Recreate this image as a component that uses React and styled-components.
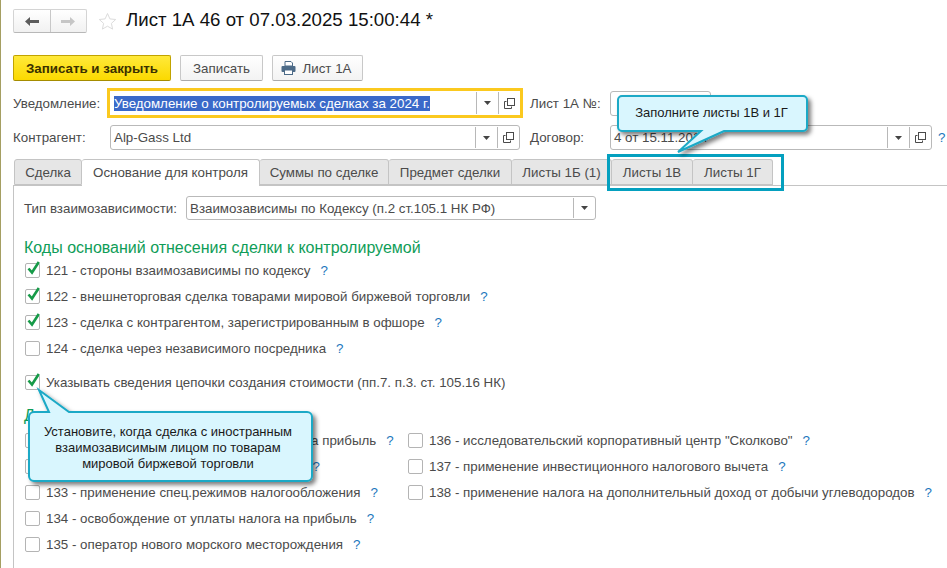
import React from "react";
import styled, { createGlobalStyle } from "styled-components";

const Global = createGlobalStyle`
  html, body { margin: 0; padding: 0; background: #fff; }
  body { font-family: "Liberation Sans", Arial, sans-serif; font-size: 13.33px; color: #4b4b4b; }
`;

const Page = styled.div`
  position: relative; width: 947px; height: 568px; overflow: hidden; box-sizing: border-box;
  border-left: 1px solid #a59f62; padding: 0 0 0 12px; background: #fff;
`;
const TitleBar = styled.div`display: flex; align-items: center; height: 24px; margin-top: 9px;`;
const NavGroup = styled.div`
  display: flex; width: 74px; height: 24px; box-sizing: border-box; border: 1px solid #d4d4d4;
  border-bottom-color: #b8b8b8; border-radius: 2px; background: linear-gradient(#fff, #f1f1f1);
`;
const NavBtn = styled.div`
  flex: 1; display: flex; align-items: center; justify-content: center;
  & + & { border-left: 1px solid #c8c8c8; }
`;
const Star = styled.svg`margin-left: 11px; width: 19px; height: 19px; flex: none;`;
const Title = styled.div`margin-left: 9px; font-size: 18.67px; color: #111; white-space: nowrap; position: relative; top: -1px;`;
const Toolbar = styled.div`display: flex; gap: 9px; margin-top: 22px; height: 26px;`;
const Button = styled.div`
  display: flex; align-items: center; justify-content: center; gap: 7px; box-sizing: border-box;
  width: ${p => p.$w}px; height: 26px; border-radius: 2px; white-space: nowrap; padding-right: ${p => p.$pr || 0}px;
  border: 1px solid ${p => (p.$primary ? "#c1a300" : "#c8c8c8")};
  border-bottom-color: ${p => (p.$primary ? "#a58c00" : "#aaa")};
  background: ${p => (p.$primary ? "linear-gradient(#ffe93a, #fbd900)" : "linear-gradient(#fff, #f3f3f3)")};
  color: ${p => (p.$primary ? "#3a3000" : "#4b4b4b")};
  font-weight: ${p => (p.$primary ? 700 : 400)};
`;
const FormRow = styled.div`display: flex; align-items: center; height: ${p => p.$h || 25}px; margin-top: ${p => p.$mt || 0}px;`;
const Label = styled.div`width: ${p => p.$w}px; flex: none; white-space: nowrap; margin-left: ${p => p.$ml || 0}px;`;
const Field = styled.div`
  display: flex; align-items: stretch; box-sizing: border-box; width: ${p => p.$w}px; height: ${p => p.$h || 25}px; flex: none;
  border: 1px solid #b9b9b9; border-radius: 3px; background: #fff;
  ${p => p.$focus && "border: 3px solid #fbc91f; border-radius: 0; height: 30px;"}
`;
const FieldText = styled.div`flex: 1; padding-left: ${p => p.$pl || 3}px; display: flex; align-items: center; white-space: nowrap; overflow: hidden; color: #4b4b4b;`;
const Selected = styled.span`background: #3a69c9; color: #fff; line-height: 15px;`;
const FieldBtn = styled.div`
  width: 21px; flex: none; display: flex; align-items: center; justify-content: center;
  margin: 1px 0; border-left: 1px solid #b8b8b8;
`;
const Help = styled.span`color: #1c78bd; font-size: 13.33px; margin-left: ${p => p.$ml || 10}px;`;
const Tabs = styled.div`
  display: flex; height: 27px; margin-top: 9px; padding-left: 1px; box-sizing: border-box;
  border-bottom: 1px solid #c4c4c4;
`;
const Tab = styled.div`
  width: ${p => p.$w}px; box-sizing: border-box; height: ${p => (p.$active ? 27 : 26)}px; flex: none;
  display: flex; align-items: center; justify-content: center; white-space: nowrap;
  padding-bottom: ${p => (p.$active ? 1 : 0)}px;
  border: 1px solid #c4c4c4; border-left-width: ${p => (p.$first ? 1 : 0)}px; border-bottom: ${p => (p.$active ? "0" : "1px solid #c4c4c4")};
  border-radius: 3px 3px 0 0; background: ${p => (p.$active ? "#fff" : "#e6e6e6")}; color: #4b4b4b;
`;
const Panel = styled.div`
  box-sizing: border-box; height: 382px; border-left: 1px solid #c4c4c4; padding: 10px 0 0 10px;
`;
const TypeRow = styled.div`display: flex; align-items: center; height: 24px;`;
const Heading = styled.div`font-size: 16px; color: #0f9d58; margin-top: ${p => p.$mt}px; height: 18px; line-height: 18px; white-space: nowrap;`;
const CheckList = styled.div`display: flex; flex-direction: column;`;
const CheckRow = styled.div`display: flex; align-items: center; height: 26px; white-space: nowrap;`;
const Box = styled.div`
  position: relative; width: 15px; height: 15px; box-sizing: border-box; flex: none; margin: 0 6px 0 1px;
  border: 1px solid #b4b4b4; border-radius: 2px; background: #fff;
`;
const Tick = styled.svg`position: absolute; left: 0; top: -4px; width: 15px; height: 16px;`;
const Columns = styled.div`display: grid; grid-template-columns: 383px 1fr; margin-top: 2px;`;
const Spacer = styled.div`height: 8px;`;
const Outline = styled.div`
  position: absolute; left: 606px; top: 154px; width: 177px; height: 37px; box-sizing: border-box; border: 3px solid #04a0bf;
`;
const CalloutSvg = styled.svg`position: absolute; left: 0; top: 0; overflow: visible;`;
const CalloutText = styled.div`
  position: absolute; left: ${p => p.$x}px; top: ${p => p.$y}px; width: ${p => p.$w}px; height: ${p => p.$h}px;
  display: flex; align-items: center; justify-content: center; text-align: center; color: #1a1a1a;
  font-size: 13px; line-height: 16px; white-space: nowrap;
`;

const Dropdown = () => (
  <svg width="7" height="4" viewBox="0 0 7 4"><path d="M0 0h7L3.500 4z" fill="#444" /></svg>
);
const OpenIcon = () => (
  <svg width="11" height="11" viewBox="0 0 11 11" fill="none" stroke="#4a4a4a">
    <rect x="3.500" y="0.500" width="7" height="7" fill="#fff" />
    <path d="M2.500 3.500H0.500v7h7V8.500" />
  </svg>
);
const Arrow = ({ flip, color }) => (
  <svg width="14" height="9" viewBox="0 0 14 9" style={flip ? { transform: "scaleX(-1)" } : undefined}>
    <path d="M0 4.500L5 0v3h9v3H5v3z" fill={color} />
  </svg>
);
const Printer = () => (
  <svg width="15" height="14" viewBox="0 0 15 14">
    <path d="M4 0.500h6l1.500 1.500V5H4z" fill="#fff" stroke="#4d6b88" />
    <rect x="0.500" y="5" width="14" height="6" rx="1" fill="#4d6b88" />
    <rect x="3.500" y="9" width="8" height="4.500" fill="#fff" stroke="#4d6b88" />
  </svg>
);
const Check = ({ on }) => (
  <Box>
    {on && (
      <Tick viewBox="0 0 15 16">
        <path d="M2.500 8.500l3.500 4L12.800 2" fill="none" stroke="#169a48" strokeWidth="2.600" />
      </Tick>
    )}
  </Box>
);
const Item = ({ on, text }) => (
  <CheckRow>
    <Check on={on} />
    {text}
    <Help>?</Help>
  </CheckRow>
);

export default function App() {
  return (
    <Page>
      <Global />
      <TitleBar>
        <NavGroup>
          <NavBtn><Arrow color="#5c5c5c" /></NavBtn>
          <NavBtn><Arrow flip color="#c6c6c6" /></NavBtn>
        </NavGroup>
        <Star viewBox="0 0 19 19">
          <path d="M9.500 1.500l2.400 5.400 5.800.6-4.300 3.900 1.200 5.700-5.100-2.900-5.100 2.900 1.200-5.700L1.300 7.500l5.800-.6z" fill="#fff" stroke="#dcdcdc" />
        </Star>
        <Title>Лист 1А 46 от 07.03.2025 15:00:44 *</Title>
      </TitleBar>
      <Toolbar>
        <Button $primary $w={158}>Записать и закрыть</Button>
        <Button $w={83}>Записать</Button>
        <Button $w={91} $pr={3}><Printer />Лист 1А</Button>
      </Toolbar>
      <FormRow $h={30} $mt={7}>
        <Label $w={94}>Уведомление:</Label>
        <Field $focus $w={416}>
          <FieldText $pl={4}><Selected>Уведомление о контролируемых сделках за 2024 г.</Selected></FieldText>
          <FieldBtn><Dropdown /></FieldBtn>
          <FieldBtn><OpenIcon /></FieldBtn>
        </Field>
        <Label $w={80} $ml={7}>Лист 1А №:</Label>
        <Field $w={101} />
      </FormRow>
      <FormRow $mt={7}>
        <Label $w={97}>Контрагент:</Label>
        <Field $w={410}>
          <FieldText>Alp-Gass Ltd</FieldText>
          <FieldBtn><Dropdown /></FieldBtn>
          <FieldBtn><OpenIcon /></FieldBtn>
        </Field>
        <Label $w={80} $ml={10}>Договор:</Label>
        <Field $w={322}>
          <FieldText>4 от 15.11.2024</FieldText>
          <FieldBtn><Dropdown /></FieldBtn>
          <FieldBtn><OpenIcon /></FieldBtn>
        </Field>
        <Help $ml={6}>?</Help>
      </FormRow>
      <Tabs>
        <Tab $first $w={68}>Сделка</Tab>
        <Tab $active $w={178}>Основание для контроля</Tab>
        <Tab $w={129}>Суммы по сделке</Tab>
        <Tab $w={123}>Предмет сделки</Tab>
        <Tab $w={100}>Листы 1Б (1)</Tab>
        <Tab $w={81}>Листы 1В</Tab>
        <Tab $w={80}>Листы 1Г</Tab>
      </Tabs>
      <Panel>
        <TypeRow>
          <Label $w={162}>Тип взаимозависимости:</Label>
          <Field $w={410} $h={24}>
            <FieldText>Взаимозависимы по Кодексу (п.2 ст.105.1 НК РФ)</FieldText>
            <FieldBtn><Dropdown /></FieldBtn>
          </Field>
        </TypeRow>
        <Heading $mt={19}>Коды оснований отнесения сделки к контролируемой</Heading>
        <CheckList>
          <Item on text="121 - стороны взаимозависимы по кодексу" />
          <Item on text="122 - внешнеторговая сделка товарами мировой биржевой торговли" />
          <Item on text="123 - сделка с контрагентом, зарегистрированным в офшоре" />
          <Item text="124 - сделка через независимого посредника" />
        </CheckList>
        <Spacer />
        <CheckRow>
          <Check on />
          Указывать сведения цепочки создания стоимости (пп.7. п.3. ст. 105.16 НК)
        </CheckRow>
        <Heading $mt={12}>Дополнительные коды</Heading>
        <Columns>
          <CheckList>
            <Item text="131 - применение нулевой ставки налога на прибыль" />
            <Item text={"132 - резидент особой экономичес.\u00A0 зоны"} />
            <Item text="133 - применение спец.режимов налогообложения" />
            <Item text="134 - освобождение от уплаты налога на прибыль" />
            <Item text="135 - оператор нового морского месторождения" />
          </CheckList>
          <CheckList>
            <Item text={'136 - исследовательский корпоративный центр "Сколково"'} />
            <Item text="137 - применение инвестиционного налогового вычета" />
            <Item text="138 - применение налога на дополнительный доход от добычи углеводородов" />
          </CheckList>
        </Columns>
      </Panel>
      <Outline />
      <CalloutSvg width="947" height="568">
        <defs>
          <filter id="sh" x="-20%" y="-20%" width="140%" height="150%">
            <feDropShadow dx="3" dy="3" stdDeviation="2" floodColor="#000" floodOpacity="0.5" />
          </filter>
        </defs>
        <path filter="url(#sh)" fill="#d9f6fe" stroke="#1aa9c6" strokeWidth="2"
          d="M621 96H802a4 4 0 0 1 4 4V127a4 4 0 0 1-4 4H723L677 152L700 131H621a4 4 0 0 1-4-4V100a4 4 0 0 1 4-4Z" />
        <path filter="url(#sh)" fill="#d9f6fe" stroke="#1aa9c6" strokeWidth="2"
          d="M33 412H48L38 390L68 412H306a5 5 0 0 1 5 5V476a5 5 0 0 1-5 5H33a5 5 0 0 1-5-5V417a5 5 0 0 1 5-5Z" />
      </CalloutSvg>
      <CalloutText $x={616} $y={96} $w={189} $h={33}>Заполните листы 1В и 1Г</CalloutText>
      <CalloutText $x={26} $y={412} $w={282} $h={72}>Установите, когда сделка с иностранным<br />взаимозависимым лицом по товарам<br />мировой биржевой торговли</CalloutText>
    </Page>
  );
}
